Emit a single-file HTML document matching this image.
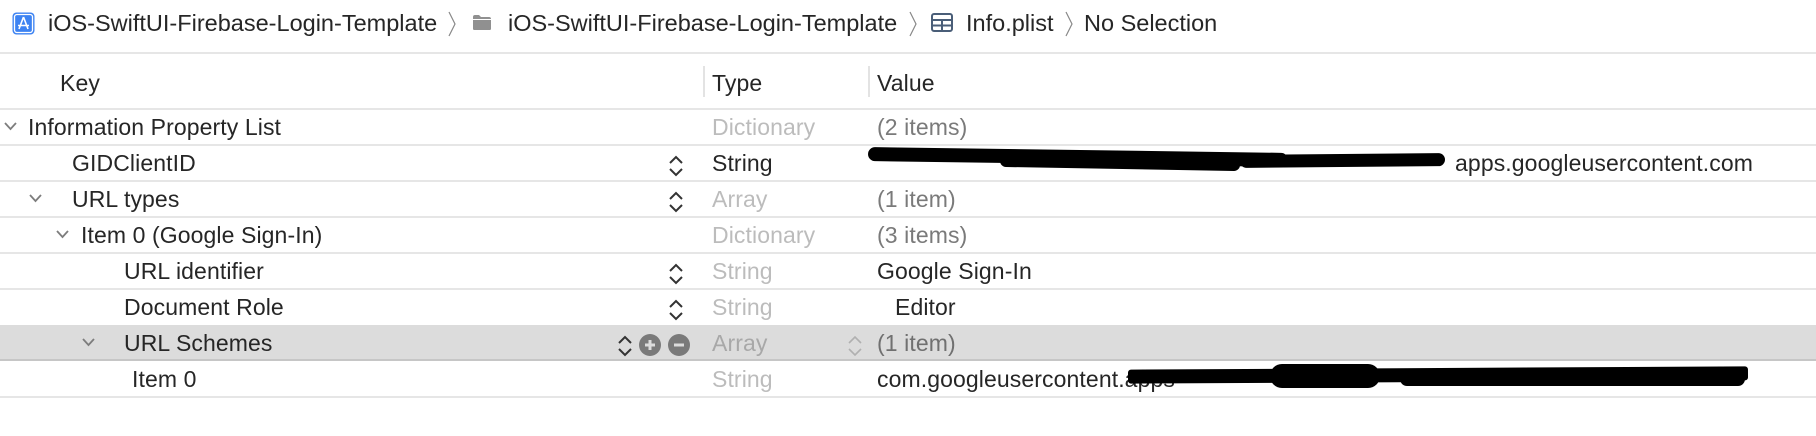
<!DOCTYPE html>
<html><head><meta charset="utf-8"><style>
*{margin:0;padding:0;box-sizing:border-box}
body{width:1816px;height:436px;background:#fff;font-family:"Liberation Sans",sans-serif;color:#262626;position:relative;overflow:hidden}
.a{position:absolute;white-space:nowrap}
.bc{font-size:23.5px;top:10px;line-height:26px;color:#262626}
.t{font-size:23px;line-height:26px;letter-spacing:0.1px}
.g{color:#bcbcbc}
.line{position:absolute;left:0;width:1816px;height:2px;background:#e6e6e6}
.sel{position:absolute;left:0;width:1816px;top:325px;height:36px;background:#dcdcdc;border-bottom:2px solid #c6c6c6}
.black{position:absolute;background:#000;border-radius:8px}
</style></head><body>
<!-- breadcrumb -->
<svg class="a" style="left:12px;top:12px" width="23" height="23" viewBox="0 0 23 23"><rect x="0.5" y="0.5" width="22" height="22" rx="4" fill="#3d83f2"/><rect x="2.5" y="2.5" width="18" height="18" rx="2.5" fill="none" stroke="#fff" stroke-width="1.3"/><path d="M11.5 5 L7 17 M11.5 5 L16 17 M6 13.5 H17" stroke="#fff" stroke-width="1.6" fill="none"/></svg>
<div class="a bc" style="left:48px">iOS-SwiftUI-Firebase-Login-Template</div>
<svg class="a" style="left:447px;top:10px" width="10" height="28"><path d="M2 2 L8 14 L2 26" stroke="#888" stroke-width="1.2" fill="none"/></svg>
<svg class="a" style="left:473px;top:14px" width="18" height="17"><path d="M0 3 Q0 1 2 1 H6 L8 3 H16 Q18 3 18 5 V15 Q18 16 16 16 H2 Q0 16 0 15Z" fill="#909090"/><rect x="0" y="5" width="18" height="1" fill="#fff"/></svg>
<div class="a bc" style="left:508px">iOS-SwiftUI-Firebase-Login-Template</div>
<svg class="a" style="left:908px;top:10px" width="10" height="28"><path d="M2 2 L8 14 L2 26" stroke="#888" stroke-width="1.2" fill="none"/></svg>
<svg class="a" style="left:931px;top:13px" width="22" height="19"><rect x="1" y="1" width="20" height="17" rx="2" fill="none" stroke="#4a5e78" stroke-width="2"/><path d="M1 7 H21 M1 12.5 H21 M11 7 V18" stroke="#4a5e78" stroke-width="2"/></svg>
<div class="a bc" style="left:966px">Info.plist</div>
<svg class="a" style="left:1064px;top:10px" width="10" height="28"><path d="M2 2 L8 14 L2 26" stroke="#888" stroke-width="1.2" fill="none"/></svg>
<div class="a bc" style="left:1084px">No Selection</div>
<div class="line" style="top:52px"></div>
<!-- header -->
<div class="a t" style="left:60px;top:70px">Key</div>
<div class="a" style="left:703px;top:66px;width:2px;height:31px;background:#e3e3e3"></div>
<div class="a t" style="left:712px;top:70px">Type</div>
<div class="a" style="left:868px;top:66px;width:2px;height:31px;background:#e3e3e3"></div>
<div class="a t" style="left:877px;top:70px">Value</div>
<div class="line" style="top:108px"></div>
<div class="line" style="top:144px"></div>
<div class="line" style="top:180px"></div>
<div class="line" style="top:216px"></div>
<div class="line" style="top:252px"></div>
<div class="line" style="top:288px"></div>
<div class="sel"></div>
<div class="line" style="top:396px"></div>
<!-- chevrons -->
<svg class="a" style="left:3px;top:121px" width="15" height="10"><path d="M2 2 L7.5 8 L13 2" stroke="#7d7d7d" stroke-width="1.8" fill="none"/></svg>
<svg class="a" style="left:28px;top:193px" width="15" height="10"><path d="M2 2 L7.5 8 L13 2" stroke="#7d7d7d" stroke-width="1.8" fill="none"/></svg>
<svg class="a" style="left:55px;top:229px" width="15" height="10"><path d="M2 2 L7.5 8 L13 2" stroke="#7d7d7d" stroke-width="1.8" fill="none"/></svg>
<svg class="a" style="left:81px;top:337px" width="15" height="10"><path d="M2 2 L7.5 8 L13 2" stroke="#7d7d7d" stroke-width="1.8" fill="none"/></svg>
<!-- keys -->
<div class="a t" style="left:28px;top:114px">Information Property List</div>
<div class="a t" style="left:72px;top:150px">GIDClientID</div>
<div class="a t" style="left:72px;top:186px">URL types</div>
<div class="a t" style="left:81px;top:222px">Item 0 (Google Sign-In)</div>
<div class="a t" style="left:124px;top:258px">URL identifier</div>
<div class="a t" style="left:124px;top:294px">Document Role</div>
<div class="a t" style="left:124px;top:330px">URL Schemes</div>
<div class="a t" style="left:132px;top:366px">Item 0</div>
<!-- steppers -->
<svg class="a" style="left:668px;top:155px" width="16" height="22"><path d="M2 8 L8 2 L14 8 M2 14 L8 20 L14 14" stroke="#333" stroke-width="2" fill="none"/></svg>
<svg class="a" style="left:668px;top:191px" width="16" height="22"><path d="M2 8 L8 2 L14 8 M2 14 L8 20 L14 14" stroke="#333" stroke-width="2" fill="none"/></svg>
<svg class="a" style="left:668px;top:263px" width="16" height="22"><path d="M2 8 L8 2 L14 8 M2 14 L8 20 L14 14" stroke="#333" stroke-width="2" fill="none"/></svg>
<svg class="a" style="left:668px;top:299px" width="16" height="22"><path d="M2 8 L8 2 L14 8 M2 14 L8 20 L14 14" stroke="#333" stroke-width="2" fill="none"/></svg>
<svg class="a" style="left:617px;top:335px" width="16" height="22"><path d="M2 8 L8 2 L14 8 M2 14 L8 20 L14 14" stroke="#333" stroke-width="2" fill="none"/></svg>
<svg class="a" style="left:639px;top:334px" width="22" height="22"><circle cx="11" cy="11" r="11" fill="#7a7a7a"/><path d="M11 6 V16 M6 11 H16" stroke="#dcdcdc" stroke-width="3"/></svg>
<svg class="a" style="left:668px;top:334px" width="22" height="22"><circle cx="11" cy="11" r="11" fill="#7a7a7a"/><path d="M6 11 H16" stroke="#dcdcdc" stroke-width="3"/></svg>
<svg class="a" style="left:847px;top:335px" width="16" height="22"><path d="M2 8 L8 2 L14 8 M2 14 L8 20 L14 14" stroke="#b0b0b0" stroke-width="1.6" fill="none"/></svg>
<!-- types -->
<div class="a t g" style="left:712px;top:114px">Dictionary</div>
<div class="a t" style="left:712px;top:150px">String</div>
<div class="a t g" style="left:712px;top:186px">Array</div>
<div class="a t g" style="left:712px;top:222px">Dictionary</div>
<div class="a t g" style="left:712px;top:258px">String</div>
<div class="a t g" style="left:712px;top:294px">String</div>
<div class="a t" style="left:712px;top:330px;color:#a8a8a8">Array</div>
<div class="a t g" style="left:712px;top:366px">String</div>
<!-- values -->
<div class="a t" style="left:877px;top:114px;color:#7a7a7a">(2 items)</div>
<div class="a t" style="right:63px;top:150px">apps.googleusercontent.com</div>
<div class="black" style="left:868px;top:150px;width:420px;height:14px;transform:rotate(0.8deg)"></div>
<div class="black" style="left:1000px;top:157px;width:240px;height:12px;transform:rotate(1deg)"></div>
<div class="black" style="left:1240px;top:154px;width:205px;height:13px;transform:rotate(-0.5deg)"></div>
<div class="a t" style="left:877px;top:186px;color:#7a7a7a">(1 item)</div>
<div class="a t" style="left:877px;top:222px;color:#7a7a7a">(3 items)</div>
<div class="a t" style="left:877px;top:258px">Google Sign-In</div>
<div class="a t" style="left:895px;top:294px">Editor</div>
<div class="a t" style="left:877px;top:330px;color:#707070">(1 item)</div>
<div class="a t" style="left:877px;top:366px">com.googleusercontent.apps</div>
<div class="black" style="left:1128px;top:368px;width:620px;height:14px;border-radius:3px;transform:rotate(-0.3deg)"></div>
<div class="black" style="left:1270px;top:364px;width:110px;height:24px;border-radius:12px"></div>
<div class="black" style="left:1400px;top:372px;width:345px;height:14px"></div>
</body></html>
